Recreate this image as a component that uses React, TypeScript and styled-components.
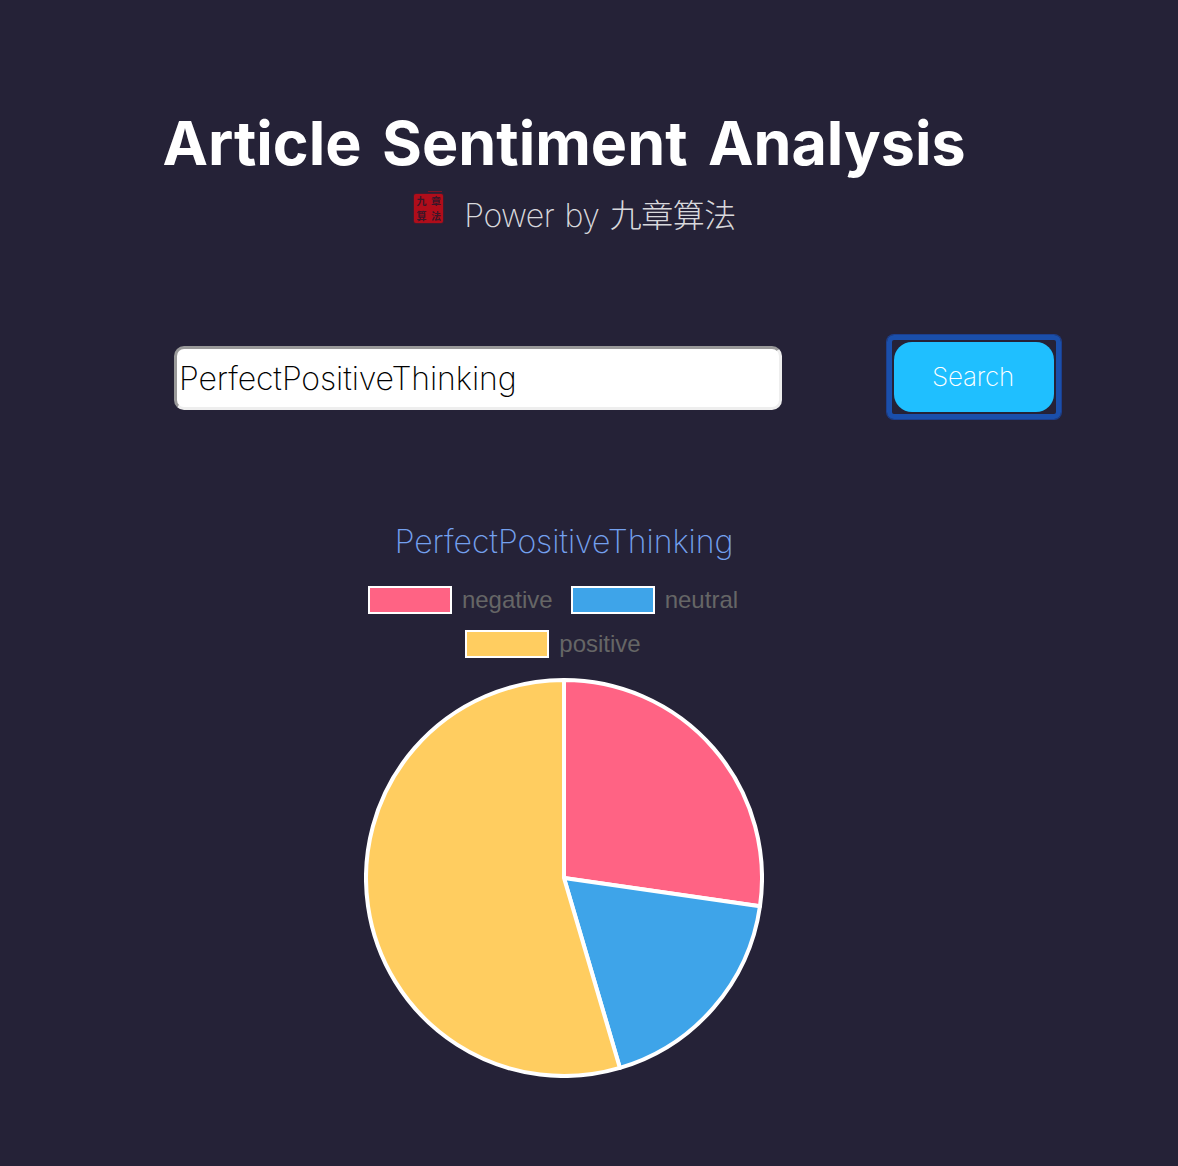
import React from 'react';
import styled, { createGlobalStyle } from 'styled-components';

const GlobalStyle = createGlobalStyle`
  html, body {
    margin: 0;
    padding: 0;
    background-color: #252237;
  }
`;

const sans = `Inter, "Noto Sans CJK SC", sans-serif`;

const Page = styled.div`
  width: 1178px;
  height: 1166px;
  box-sizing: border-box;
  padding-top: 106px;
  font-family: ${sans};
  overflow: hidden;
`;

const Header = styled.header`
  width: 1128px;
  display: flex;
  flex-direction: column;
  align-items: center;
`;

const Title = styled.h1`
  margin: 0;
  font-size: 61px;
  line-height: 74px;
  font-weight: 700;
  word-spacing: 6px;
  color: #ffffff;
  white-space: nowrap;
`;

const Credit = styled.div`
  display: flex;
  align-items: center;
  gap: 21px;
  margin-top: 8px;
  padding-left: 22px;
  height: 50px;
`;

const Seal = styled.div`
  position: relative;
  width: 29px;
  height: 29px;
  margin-top: -9px;
  display: grid;
  grid-template-columns: 1fr 1fr;
  grid-template-rows: 1fr 1fr;
  align-items: center;
  justify-items: center;
  background-color: #b00d1a;
  border-radius: 2px;
  box-shadow: 0 0 2px rgba(176, 13, 26, 0.7);
  color: #3a1628;
  font-family: "Noto Sans CJK SC", sans-serif;
  font-weight: 700;

  &::before {
    content: "";
    position: absolute;
    top: -3px;
    right: 1px;
    width: 14px;
    height: 1px;
    background-color: rgba(176, 13, 26, 0.6);
  }
`;

const SealChar = styled.span`
  display: block;
  font-size: 10px;
  line-height: 12px;
  height: 12px;
`;

const CreditText = styled.span`
  font-size: 32px;
  font-weight: 250;
  letter-spacing: -0.55px;
  word-spacing: 2px;
  color: #d8d8dc;
  white-space: nowrap;
`;

const SearchRow = styled.div`
  display: flex;
  align-items: center;
  margin-top: 97px;
  padding-left: 174px;
`;

const Input = styled.input`
  width: 608px;
  height: 64px;
  margin-top: 2px;
  box-sizing: border-box;
  padding: 0 2px;
  border-width: 3px;
  border-style: solid;
  border-color: #9a9a9a #eeeeee #eeeeee #9a9a9a;
  border-radius: 10px;
  background-color: #ffffff;
  font-family: ${sans};
  font-size: 32px;
  font-weight: 250;
  letter-spacing: -0.1px;
  color: #000000;
  outline: none;
`;

const FocusRing = styled.div`
  margin-left: 105px;
  padding: 2px;
  border: 5px solid #1a4fab;
  border-radius: 7px;
  box-shadow: 0 0 0 1px #1c3f8e;
  display: flex;
`;

const Button = styled.button`
  width: 160px;
  height: 70px;
  border: none;
  border-radius: 18px;
  background-color: #1fbfff;
  color: #ffffff;
  font-family: ${sans};
  font-size: 26px;
  font-weight: 250;
  letter-spacing: -0.2px;
  padding: 0 2px 2px 0;
`;

const Chart = styled.section`
  width: 400px;
  margin: 100px 0 0 364px;
  display: flex;
  flex-direction: column;
  align-items: center;
`;

const ChartTitle = styled.div`
  font-size: 32px;
  line-height: 46px;
  font-weight: 250;
  letter-spacing: -0.05px;
  color: #74a0ee;
  white-space: nowrap;
`;

const Legend = styled.ul`
  list-style: none;
  margin: 21px 0 0;
  padding: 0 22px 0 0;
  width: 400px;
  box-sizing: border-box;
  display: flex;
  flex-wrap: wrap;
  justify-content: center;
  column-gap: 18px;
  row-gap: 16px;
`;

const LegendItem = styled.li`
  display: flex;
  align-items: center;
  gap: 10px;
  height: 28px;
  font-family: "Liberation Sans", Arial, sans-serif;
  font-size: 24px;
  color: #666666;
`;

const Swatch = styled.span<{ $color: string }>`
  width: 84px;
  height: 28px;
  box-sizing: border-box;
  border: 2px solid #ffffff;
  background-color: ${(p) => p.$color};
`;

const Pie = styled.svg`
  display: block;
  margin-top: 20px;
`;

const slices = [
  { label: 'negative', color: '#ff6384', from: 0, to: 98.2 },
  { label: 'neutral', color: '#3ea4e9', from: 98.2, to: 163.6 },
  { label: 'positive', color: '#ffcd60', from: 163.6, to: 360 },
];

function slicePath(from: number, to: number): string {
  const r = 198;
  const point = (deg: number) => {
    const a = (deg * Math.PI) / 180;
    return `${200 + r * Math.sin(a)} ${200 - r * Math.cos(a)}`;
  };
  const large = to - from > 180 ? 1 : 0;
  return `M200 200 L${point(from)} A${r} ${r} 0 ${large} 1 ${point(to)} Z`;
}

export default function App() {
  return (
    <Page>
      <GlobalStyle />
      <Header>
        <Title>Article Sentiment Analysis</Title>
        <Credit>
          <Seal>
            <SealChar>九</SealChar>
            <SealChar>章</SealChar>
            <SealChar>算</SealChar>
            <SealChar>法</SealChar>
          </Seal>
          <CreditText>Power by 九章算法</CreditText>
        </Credit>
      </Header>
      <SearchRow>
        <Input defaultValue="PerfectPositiveThinking" />
        <FocusRing>
          <Button>Search</Button>
        </FocusRing>
      </SearchRow>
      <Chart>
        <ChartTitle>PerfectPositiveThinking</ChartTitle>
        <Legend>
          {slices.map((s) => (
            <LegendItem key={s.label}>
              <Swatch $color={s.color} />
              {s.label}
            </LegendItem>
          ))}
        </Legend>
        <Pie width="400" height="400" viewBox="0 0 400 400">
          {slices.map((s) => (
            <path
              key={s.label}
              d={slicePath(s.from, s.to)}
              fill={s.color}
              stroke="#ffffff"
              strokeWidth="4"
              strokeLinejoin="round"
            />
          ))}
        </Pie>
      </Chart>
    </Page>
  );
}
